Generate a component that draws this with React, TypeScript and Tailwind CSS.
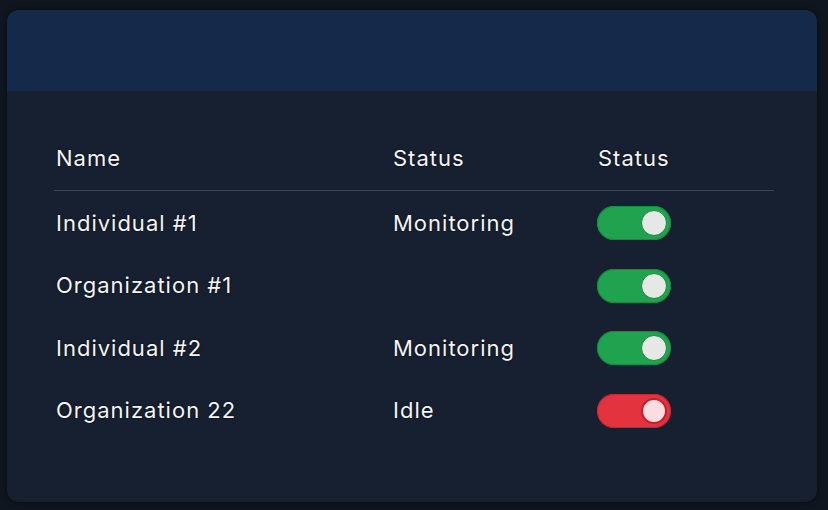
import React from "react";

type Row = { name: string; status: string; on: "green" | "red" };

const rows: Row[] = [
  { name: "Individual #1", status: "Monitoring", on: "green" },
  { name: "Organization #1", status: "", on: "green" },
  { name: "Individual #2", status: "Monitoring", on: "green" },
  { name: "Organization 22", status: "Idle", on: "red" },
];

function Toggle({ color }: { color: "green" | "red" }) {
  const track =
    color === "green"
      ? "bg-[#1fa34e] shadow-[inset_0_0_0_1px_#168a3f]"
      : "bg-[#e2333f] shadow-[inset_0_0_0_1px_#c82532]";
  const knob =
    color === "green"
      ? "bg-[#e6e8e6] border border-[#138a3c]"
      : "bg-[#f9dde1] border-2 border-[#c81d2c]";
  return (
    <div className={`flex h-[34px] w-[74px] items-center justify-end rounded-full pr-[4px] ${track}`}>
      <div className={`h-[26px] w-[26px] rounded-full ${knob}`} />
    </div>
  );
}

export default function App() {
  return (
    <div
      className="min-h-[510px] w-[828px] bg-[#10161f] pl-[7px] pt-[10px]"
      style={{ fontFamily: "Inter, 'Noto Sans', sans-serif" }}
    >
      <div className="flex h-[492px] w-[810px] flex-col overflow-hidden rounded-[12px] bg-[#172030] shadow-[0_0_6px_rgba(0,0,0,0.5)]">
        <div className="h-[81px] bg-[#132a4a]" />
        <div className="flex flex-col pl-[47px] pr-[43px] pt-[36px] text-[22px] tracking-[1px] text-[#f4f5f7] [text-shadow:0_0_2px_rgba(0,0,0,0.9)]">
          <div className="flex h-[63px] items-center">
            <div className="w-[338px] pl-[2px]">Name</div>
            <div className="w-[205px] pl-[1px]">Status</div>
            <div className="pl-[1px]">Status</div>
          </div>
          <div className="h-px bg-[#3b4452]" />
          <div className="h-px" />
          {rows.map((r) => (
            <div key={r.name} className="flex h-[62.5px] items-center">
              <div className="w-[338px] pl-[2px]">{r.name}</div>
              <div className="w-[205px] pl-[1px]">{r.status}</div>
              <Toggle color={r.on} />
            </div>
          ))}
        </div>
      </div>
    </div>
  );
}
